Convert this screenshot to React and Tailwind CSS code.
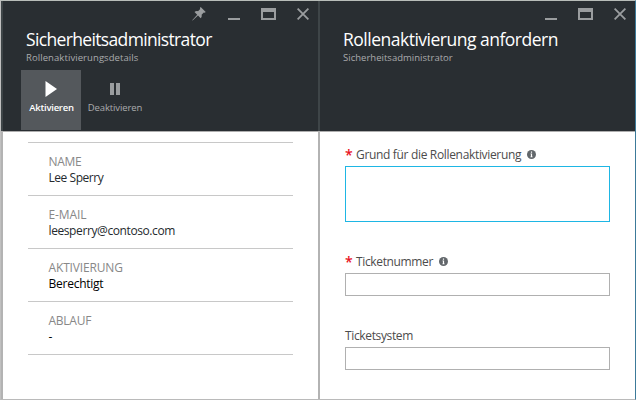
import React from "react";

function Pin() {
  return (
    <svg width="14" height="14" viewBox="0 0 14 14" fill="#9a9d9f">
      <path d="M8.7 0 L13.7 5 L12.7 5.8 L11.8 5.5 L9.6 7.7 C10 9.2 9.6 10.2 8.7 11.2 L6 8.5 L0.6 13.6 L0.2 13.2 L5.2 7.7 L2.5 5 C3.5 4.1 4.6 3.8 6 4.2 L8.2 2 L7.9 1 Z" />
    </svg>
  );
}

function WindowButtons({ pin }) {
  return (
    <div className="flex h-[13px] items-start justify-end pr-[9px]">
      {pin && (
        <div className="-mt-px mr-[22px]">
          <Pin />
        </div>
      )}
      <div className="mt-[10px] mr-[21px] h-[2px] w-[12px] bg-[#9a9d9f]" />
      <div className="mr-[21px] h-[12px] w-[15px] border-2 border-t-4 border-[#9a9d9f]" />
      <svg width="12" height="12" viewBox="0 0 12 12" stroke="#9a9d9f" strokeWidth="1.8" fill="none">
        <path d="M0.6 0.6 L11.4 11.4 M11.4 0.6 L0.6 11.4" />
      </svg>
    </div>
  );
}

function Header({ title, subtitle, pin, titleClass, subtitleClass, children }) {
  return (
    <header className="h-[131px] border-b border-[#aeaeae] bg-[#292e32] pt-[7px]">
      <WindowButtons pin={pin} />
      <div className="flex h-[29px] items-center pt-[6px] pl-[23px]">
        <h1 className={`whitespace-nowrap text-[17.5px] leading-[24px] text-white ${titleClass}`}>{title}</h1>
      </div>
      <p className={`flex h-[14px] items-center pt-[2px] pl-[23px] whitespace-nowrap text-[9.5px] text-[#a9abad] ${subtitleClass}`}>
        {subtitle}
      </p>
      {children}
    </header>
  );
}

function Detail({ label, value, labelClass, valueClass }) {
  return (
    <div className="h-[53px] border-b border-[#c8c8c8] pt-[11px] pl-[20.5px] text-[12px] leading-[16px]">
      <dt className={`text-[#888888] ${labelClass}`}>{label}</dt>
      <dd className={valueClass}>{value}</dd>
    </div>
  );
}

function Info() {
  return (
    <svg className="mb-px ml-[6px]" width="9" height="9" viewBox="0 0 9 9">
      <circle cx="4.5" cy="4.5" r="4.5" fill="#62676b" />
      <path d="M3.9 1.5h1.2v1.2H3.9zM3.5 3.6h1.6v3h.5v.7H3.4v-.7h.5V4.3h-.4z" fill="#fff" />
    </svg>
  );
}

function Label({ required, info, className, children }) {
  return (
    <div className="flex h-[20px] items-center whitespace-nowrap text-[12px] text-[#4c4c4c]">
      {required && (
        <span className="h-[20px] w-[11px] text-[14px] leading-[20px] font-semibold text-[#e81123]">*</span>
      )}
      <span className={className}>{children}</span>
      {info && <Info />}
    </div>
  );
}

export default function App() {
  return (
    <div className="flex h-[400px] w-[636px] border border-t-[#b8bdb9] border-r-[#3c7a99] border-b-[#bababa] border-l-[#c0c0c0] bg-white font-['Open_Sans','Noto_Sans',sans-serif]">
      <section className="flex w-[317px]">
        <div className="w-[2px] shrink-0 bg-[#b3b3b3]">
          <div className="h-[130px] bg-[#3e4548]" />
        </div>
        <div className="w-[315px]">
          <Header
            title="Sicherheitsadministrator"
            subtitle="Rollenaktivierungsdetails"
            pin
            titleClass="tracking-[-0.65px]"
            subtitleClass="tracking-[0.08px]"
          >
            <div className="mt-[6px] flex h-[60px] pl-[18px] text-[9.5px] leading-[14px]">
              <button className="flex w-[60px] flex-col items-center bg-[#54585c] pt-[11px] text-white">
                <svg width="12" height="16" viewBox="0 0 12 16" fill="#fff">
                  <path d="M0.5 0 L12 8 L0.5 16 Z" />
                </svg>
                <span className="mt-[4px] ml-px whitespace-nowrap font-semibold tracking-[-0.25px]">Aktivieren</span>
              </button>
              <button className="flex w-[67px] flex-col items-center pt-[13px] text-[#a9abad]">
                <span className="flex h-[12px] gap-[2px]">
                  <span className="w-[4px] bg-[#9a9d9f]" />
                  <span className="w-[4px] bg-[#9a9d9f]" />
                </span>
                <span className="mt-[6px] ml-px whitespace-nowrap tracking-[-0.1px]">Deaktivieren</span>
              </button>
            </div>
          </Header>
          <dl className="mt-[10px] ml-[25px] w-[265px] border-t border-[#c8c8c8]">
            <Detail label="NAME" value="Lee Sperry" labelClass="tracking-[-0.3px]" valueClass="text-[#252a2e] tracking-[-0.45px]" />
            <Detail label="E-MAIL" value="leesperry@contoso.com" labelClass="tracking-[-0.1px]" valueClass="text-[#252a2e] tracking-[-0.4px]" />
            <Detail label="AKTIVIERUNG" value="Berechtigt" labelClass="tracking-[-0.15px]" valueClass="text-black tracking-[-0.25px]" />
            <Detail label="ABLAUF" value="-" labelClass="tracking-[-0.25px]" valueClass="text-black" />
          </dl>
        </div>
      </section>
      <section className="flex w-[317px]">
        <div className="w-[2px] shrink-0 bg-[#b3b3b3]">
          <div className="h-[130px] bg-[#3e4548]" />
        </div>
        <div className="w-[315px]">
          <Header
            title="Rollenaktivierung anfordern"
            subtitle="Sicherheitsadministrator"
            titleClass="tracking-[-0.5px]"
            subtitleClass="tracking-[0.02px]"
          />
          <form className="pt-[13px] pl-[25px]">
            <Label required info className="tracking-[-0.33px]">Grund für die Rollenaktivierung</Label>
            <textarea className="mt-px block h-[56px] w-[265px] resize-none border border-[#1eb6e4] bg-white outline-none" />
            <div className="mt-[30px]">
              <Label required info className="tracking-[-0.36px]">Ticketnummer</Label>
              <input className="mt-px block h-[23px] w-[265px] border border-[#b0b0b0] bg-white outline-none" />
            </div>
            <div className="mt-[30px]">
              <Label className="tracking-[-0.36px]">Ticketsystem</Label>
              <input className="mt-px block h-[23px] w-[265px] border border-[#b0b0b0] bg-white outline-none" />
            </div>
          </form>
        </div>
      </section>
    </div>
  );
}
